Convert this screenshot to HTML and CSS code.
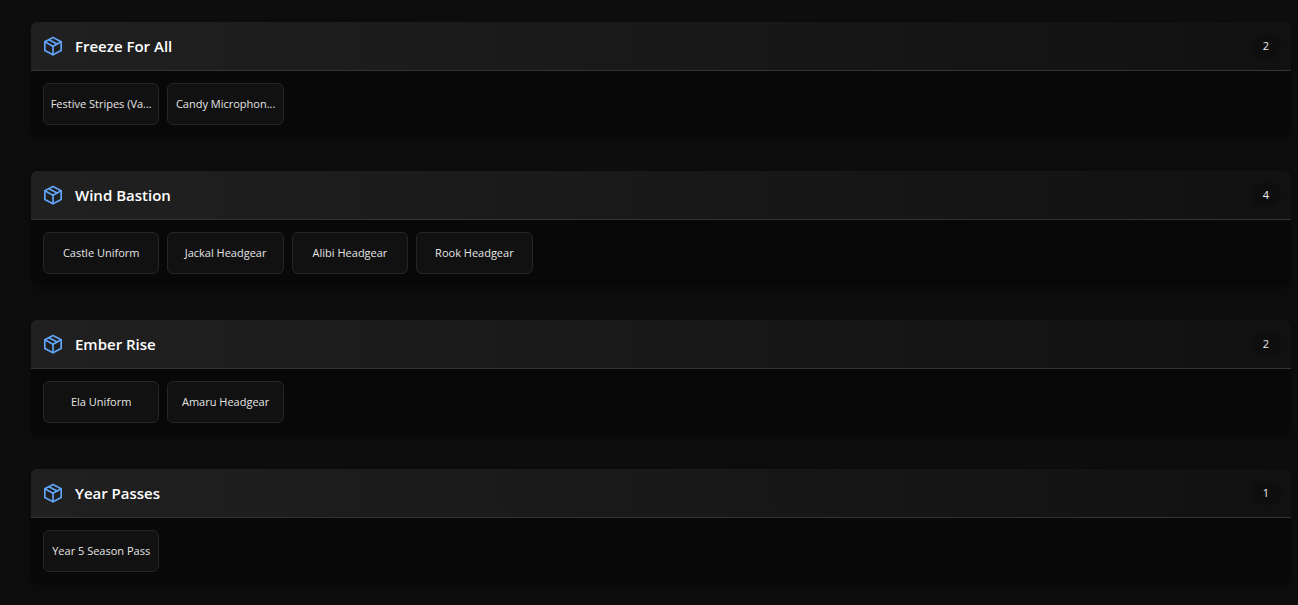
FILE: index.html
```html
<!DOCTYPE html>
<html lang="en">
<head>
  <meta charset="UTF-8" />
  <meta name="viewport" content="width=device-width, initial-scale=1.0" />
  <title>Item Collection</title>
  <link rel="stylesheet" href="styles.css">
</head>
<body>

  <svg class="icon-defs" aria-hidden="true">
    <symbol id="icon-package" viewBox="0 0 24 24">
      <path d="M12 1.900 21.800 7v10.400L12 22.500 2.200 17.400V7z" />
      <path d="M2.200 7 12 12.200 21.800 7" />
      <path d="M12 12.200v10.300" />
      <path d="M7 4.500l10 5.200" />
    </symbol>
  </svg>

  <main class="groups">
    <section class="group">
      <header class="group-header">
        <svg class="group-icon" aria-hidden="true"><use href="#icon-package" /></svg>
        <h2 class="group-title">Freeze For All</h2>
        <span class="group-count">2</span>
      </header>
      <ul class="items">
        <li class="item"><span class="item-name">Festive Stripes (Va...</span></li>
        <li class="item"><span class="item-name">Candy Microphon...</span></li>
      </ul>
    </section>

    <section class="group">
      <header class="group-header">
        <svg class="group-icon" aria-hidden="true"><use href="#icon-package" /></svg>
        <h2 class="group-title">Wind Bastion</h2>
        <span class="group-count">4</span>
      </header>
      <ul class="items">
        <li class="item"><span class="item-name">Castle Uniform</span></li>
        <li class="item"><span class="item-name">Jackal Headgear</span></li>
        <li class="item"><span class="item-name">Alibi Headgear</span></li>
        <li class="item"><span class="item-name">Rook Headgear</span></li>
      </ul>
    </section>

    <section class="group">
      <header class="group-header">
        <svg class="group-icon" aria-hidden="true"><use href="#icon-package" /></svg>
        <h2 class="group-title">Ember Rise</h2>
        <span class="group-count">2</span>
      </header>
      <ul class="items">
        <li class="item"><span class="item-name">Ela Uniform</span></li>
        <li class="item"><span class="item-name">Amaru Headgear</span></li>
      </ul>
    </section>

    <section class="group">
      <header class="group-header">
        <svg class="group-icon" aria-hidden="true"><use href="#icon-package" /></svg>
        <h2 class="group-title">Year Passes</h2>
        <span class="group-count">1</span>
      </header>
      <ul class="items">
        <li class="item"><span class="item-name">Year 5 Season Pass</span></li>
      </ul>
    </section>
  </main>

</body>
</html>
```
FILE: styles.css
```css
* {
  box-sizing: border-box;
}

body {
  margin: 0;
  background-color: #0d0d0d;
  color: #fff;
  font-family: 'Segoe UI', 'Open Sans', 'Noto Sans', sans-serif;
}

.icon-defs {
  display: none;
}

.groups {
  display: flex;
  flex-direction: column;
  gap: 34px;
  padding: 22px 7px 18px 31px;
}

.group {
  background-color: #080808;
  border-radius: 8px;
  box-shadow: 0 4px 6px rgba(0, 0, 0, 0.25);
}

.group-header {
  display: flex;
  align-items: center;
  gap: 12px;
  height: 49px;
  padding: 0 12px;
  background: linear-gradient(90deg, #202020, #111);
  border-bottom: 1px solid #333;
  border-radius: 6px 6px 0 0;
}

.group-icon {
  width: 20px;
  height: 20px;
  fill: none;
  stroke: #60a5fa;
  stroke-width: 2;
  stroke-linecap: round;
  stroke-linejoin: round;
}

.group-title {
  flex: 1;
  margin: 0;
  font-size: 15px;
  line-height: 24px;
  font-weight: 600;
}

.group-count {
  min-width: 26px;
  padding: 0 8px;
  border-radius: 12px;
  background-color: #0e0e0e;
  box-shadow: 0 0 4px #0e0e0e;
  color: #f0f0f0;
  font-size: 11px;
  line-height: 20px;
  text-align: center;
}

.items {
  display: grid;
  grid-template-columns: repeat(auto-fill, minmax(110px, 1fr));
  gap: 8px;
  margin: 0;
  padding: 12px;
  list-style: none;
}

.item {
  display: flex;
  align-items: center;
  justify-content: center;
  height: 42px;
  padding: 0 8px;
  background-color: #111;
  border: 1px solid #262626;
  border-radius: 6px;
}

.item-name {
  color: #e5e5e5;
  font-size: 11px;
  line-height: 16px;
  white-space: nowrap;
}
```
